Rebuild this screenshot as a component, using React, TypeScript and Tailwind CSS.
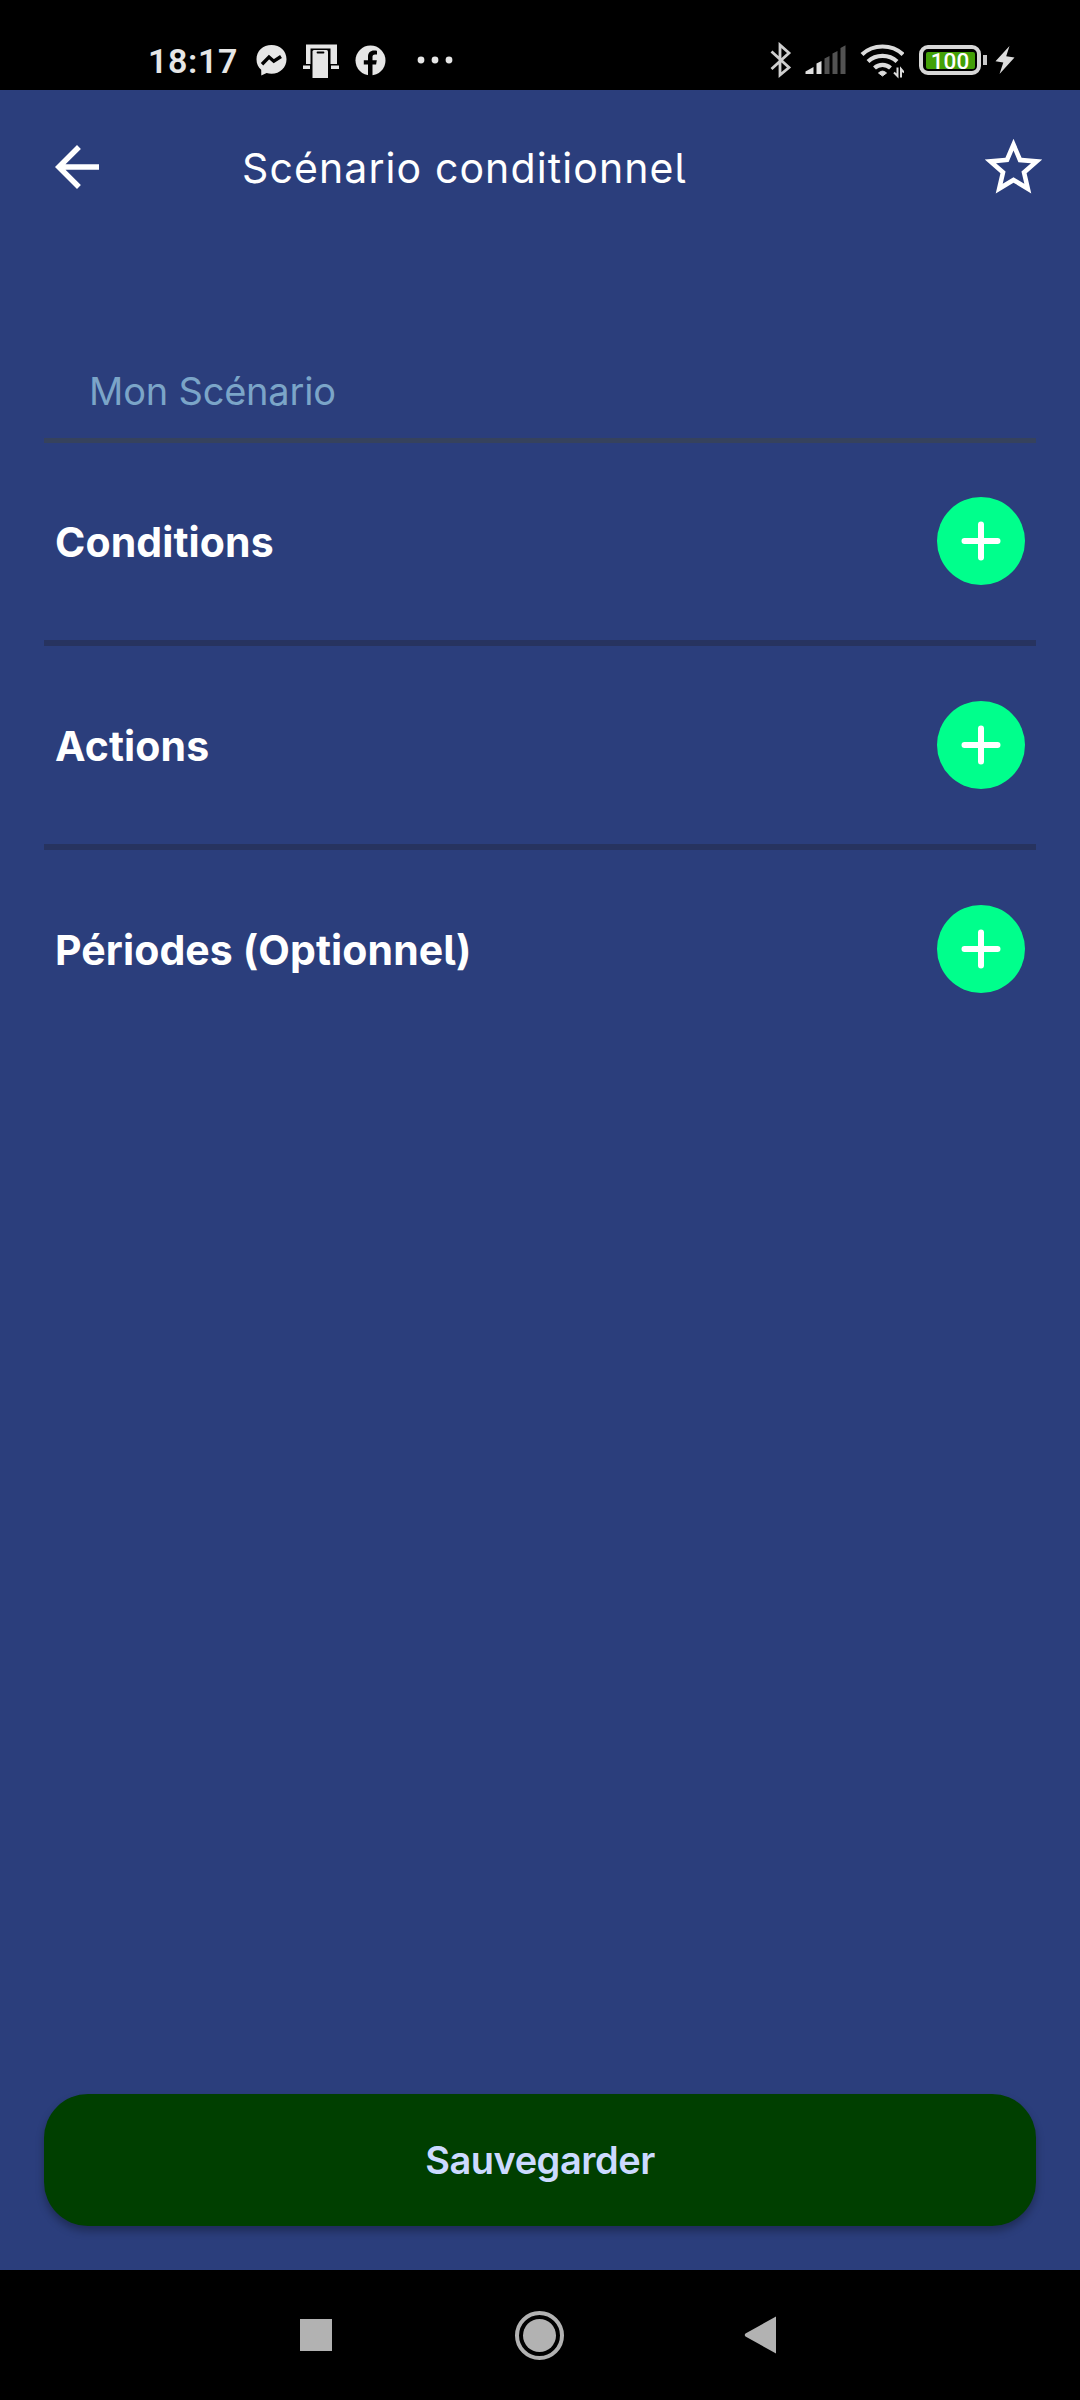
import type { ReactNode } from "react";

const FONT =
  "font-[Inter,'Liberation_Sans',sans-serif] [font-feature-settings:'cv05']";

function StatusBar() {
  return (
    <div className="flex h-[90px] shrink-0 bg-black text-[#e6e6e6]">
      <span className="ml-[148px] mt-[41px] w-[108px] font-[Roboto,sans-serif] text-[34px] font-semibold leading-[40px] tracking-[0.6px]">
        18:17
      </span>

      {/* messenger */}
      <svg className="mt-[44px] h-[32px] w-[31px] shrink-0" viewBox="0 0 31 32">
        <path
          d="M15.5 1C7 1 .5 7 .5 15.2c0 4.4 1.7 8 4.7 10.600l.1 5.700 5.300-2.400c1.500.4 3.200.6 4.900.6 8.500 0 15-6.200 15-14.500S24 1 15.500 1z"
          fill="currentColor"
        />
        <path
          d="M6 20.300l7-7.300 4.800 4.200 7.200-4.700"
          fill="none"
          stroke="#000"
          strokeWidth="3.400"
        />
      </svg>

      {/* phone in its dock */}
      <svg
        className="ml-[15px] mt-[44px] h-[35px] w-[38px] shrink-0"
        viewBox="0 0 38 35"
      >
        <path d="M4 .5h31v19.500H28.500V4.500H8.500v15.500H4z" fill="currentColor" />
        <path d="M1 21.500h7v3.500H1zM29 21.500h8v3.500h-8z" fill="currentColor" />
        <path d="M10.500 7.500q0-1.500 1.500-1.500h12.500q1.500 0 1.500 1.500V34H10.500z" fill="currentColor" />
        <path d="M15.500 8.500h6" stroke="#000" strokeWidth="1.800" strokeLinecap="round" />
      </svg>

      {/* facebook */}
      <svg
        className="ml-[15px] mt-[45px] h-[31px] w-[31px] shrink-0"
        viewBox="0 0 31 31"
      >
        <circle cx="15.500" cy="15.500" r="15" fill="currentColor" />
        <path
          d="M13 31V19.500H8.800v-4.300H13v-3.400c0-4.200 2.400-6.300 6-6.300 1.200 0 2.500.2 3 .3v3.800h-1.900c-2 0-2.600 1.100-2.600 2.500v3.100h4.300l-.7 4.300h-3.600V31z"
          fill="#000"
        />
      </svg>

      <svg
        className="ml-[31px] mt-[56px] h-[8px] w-[36px] shrink-0"
        viewBox="0 0 36 8"
        fill="currentColor"
      >
        <circle cx="4" cy="4" r="3.400" />
        <circle cx="18" cy="4" r="3.400" />
        <circle cx="32" cy="4" r="3.400" />
      </svg>

      {/* bluetooth */}
      <svg
        className="ml-auto mt-[42px] h-[36px] w-[24px] shrink-0"
        viewBox="0 0 24 36"
        fill="none"
        stroke="#cfcfcf"
        strokeWidth="2.800"
      >
        <path d="M2.500 9.500l17.500 16-9 7.500V3l9 8-17.500 16" />
      </svg>

      {/* mobile signal */}
      <svg
        className="ml-[12px] mt-[44px] h-[31px] w-[42px] shrink-0"
        viewBox="0 0 42 31"
      >
        <path d="M.5 30v-2.500L8.500 23v7z" fill="#e0e0e0" />
        <path d="M11.500 30V19.500l5-2.500v13z" fill="#e0e0e0" />
        <path
          d="M19.500 30V14.500l5-2.500v18zM27.500 30V9.500l5-2.500v23zM35.500 30V4l5-2.800V30z"
          fill="#525252"
        />
      </svg>

      {/* wifi */}
      <svg
        className="ml-[13px] mt-[43px] h-[36px] w-[44px] shrink-0"
        viewBox="0 0 44 36"
      >
        <g fill="none" stroke="#dcdcdc" strokeWidth="4.200">
          <path d="M2 11.500C13 .8 32 .8 43 11.500" />
          <path d="M8 18.500c8-7.400 21-7.400 29 0" />
          <path d="M14.500 25c4.500-4.200 11.500-4.200 16 0" />
        </g>
        <path d="M18.500 30q4-3.800 8 0L22.500 33z" fill="#dcdcdc" stroke="#dcdcdc" strokeLinejoin="round" />
        <path d="M37 25v9M41.500 25v9" stroke="#000" strokeWidth="5" />
        <path d="M37.500 24.500V33l-3.500-3.500M41 34.500V26l3 3.500" fill="none" stroke="#dcdcdc" strokeWidth="2" />
      </svg>

      {/* battery */}
      <div className="ml-[15px] mt-[45px] flex h-[30px] w-[62px] items-center justify-center rounded-[9px] border-4 border-[#d8d8d8]">
        <span className="flex h-[17px] w-[49px] items-center justify-center rounded-[2px] bg-[#43a008] pt-[2px] font-[Roboto,sans-serif] text-[22.5px] font-medium leading-none text-white">
          100
        </span>
      </div>
      <span className="ml-[2px] mt-[55px] h-[10px] w-[4px] bg-[#c8c8c8]" />
      <svg
        className="ml-[8px] mr-[65px] mt-[45px] h-[30px] w-[20px] shrink-0"
        viewBox="0 0 20 30"
      >
        <path d="M14.500 1L.5 16.200l7.800 1.300L4.500 29 19.500 12.500l-8.300-1.200z" fill="#dcdcdc" />
      </svg>
    </div>
  );
}

function Header() {
  return (
    <header className="flex h-[154px] items-center pl-[44px] pr-[32px] text-white">
      <svg className="h-[66px] w-[66px] shrink-0" viewBox="0 0 24 24" fill="currentColor">
        <path d="M20 11H7.830l5.590-5.590L12 4l-8 8 8 8 1.410-1.410L7.830 13H20v-2z" />
      </svg>
      <h1 className="ml-[132px] whitespace-nowrap pt-[2px] text-[41px] font-normal leading-[50px] tracking-[1.1px]">
        Scénario conditionnel
      </h1>
      <svg className="ml-auto h-[69px] w-[69px] shrink-0" viewBox="0 0 24 24" fill="currentColor">
        <path d="M22 9.240l-7.190-.62L12 2 9.190 8.630 2 9.240l5.460 4.730L5.820 21 12 17.270 18.180 21l-1.630-7.030L22 9.240zM12 15.400l-3.760 2.270 1-4.280-3.320-2.880 4.380-.38L12 6.100l1.710 4.040 4.380.38-3.320 2.880 1 4.280L12 15.400z" />
      </svg>
    </header>
  );
}

function Section({ children }: { children: ReactNode }) {
  return (
    <section className="flex h-[198px] items-center justify-between pl-[11px] pr-[11px]">
      <h2 className="whitespace-nowrap pt-[2px] text-[41px] font-bold leading-[50px] tracking-[0.1px] text-white">
        {children}
      </h2>
      <button className="flex h-[88px] w-[88px] items-center justify-center rounded-full bg-[#00ff8c]">
        <svg className="h-[40px] w-[40px]" viewBox="0 0 40 40">
          <path
            d="M20 3.500v33M3.500 20h33"
            stroke="#fff"
            strokeWidth="6"
            strokeLinecap="round"
          />
        </svg>
      </button>
    </section>
  );
}

function Divider() {
  return <div className="h-[6px] bg-[#27335f]" />;
}

function NavBar() {
  return (
    <nav className="flex h-[130px] shrink-0 items-center bg-black">
      <span className="ml-[300px] h-[32px] w-[32px] bg-[#b2b2b2]" />
      <span className="ml-[183px] flex h-[49px] w-[49px] items-center justify-center rounded-full border-4 border-[#b2b2b2]">
        <span className="h-[33px] w-[33px] rounded-full bg-[#b2b2b2]" />
      </span>
      <svg className="ml-[180px] h-[38px] w-[32px]" viewBox="0 0 32 38">
        <path d="M32 .5v37L1.500 20.500q-1.500-1.500 0-3z" fill="#b2b2b2" />
      </svg>
    </nav>
  );
}

export default function App() {
  return (
    <div className={`flex h-[2400px] w-[1080px] flex-col bg-[#2b3e7c] ${FONT}`}>
      <StatusBar />
      <Header />
      <main className="flex flex-1 flex-col px-[44px] pb-[44px] pt-[104px]">
        <input
          className="h-[90px] pb-[4px] pl-[45px] text-[38px] tracking-[-0.2px] text-white outline-none placeholder:text-[#7ba5c8]"
          placeholder="Mon Scénario"
        />
        <div className="-mb-px h-[5px] bg-[#36425d]" />
        <Section>Conditions</Section>
        <Divider />
        <Section>Actions</Section>
        <Divider />
        <Section>Périodes (Optionnel)</Section>
        <button className="mt-auto h-[132px] rounded-[44px] bg-[#003f00] text-[38px] font-semibold tracking-[-0.5px] text-[#ccdaff] shadow-[0_5px_8px_rgba(0,0,0,0.3)]">
          Sauvegarder
        </button>
      </main>
      <NavBar />
    </div>
  );
}
